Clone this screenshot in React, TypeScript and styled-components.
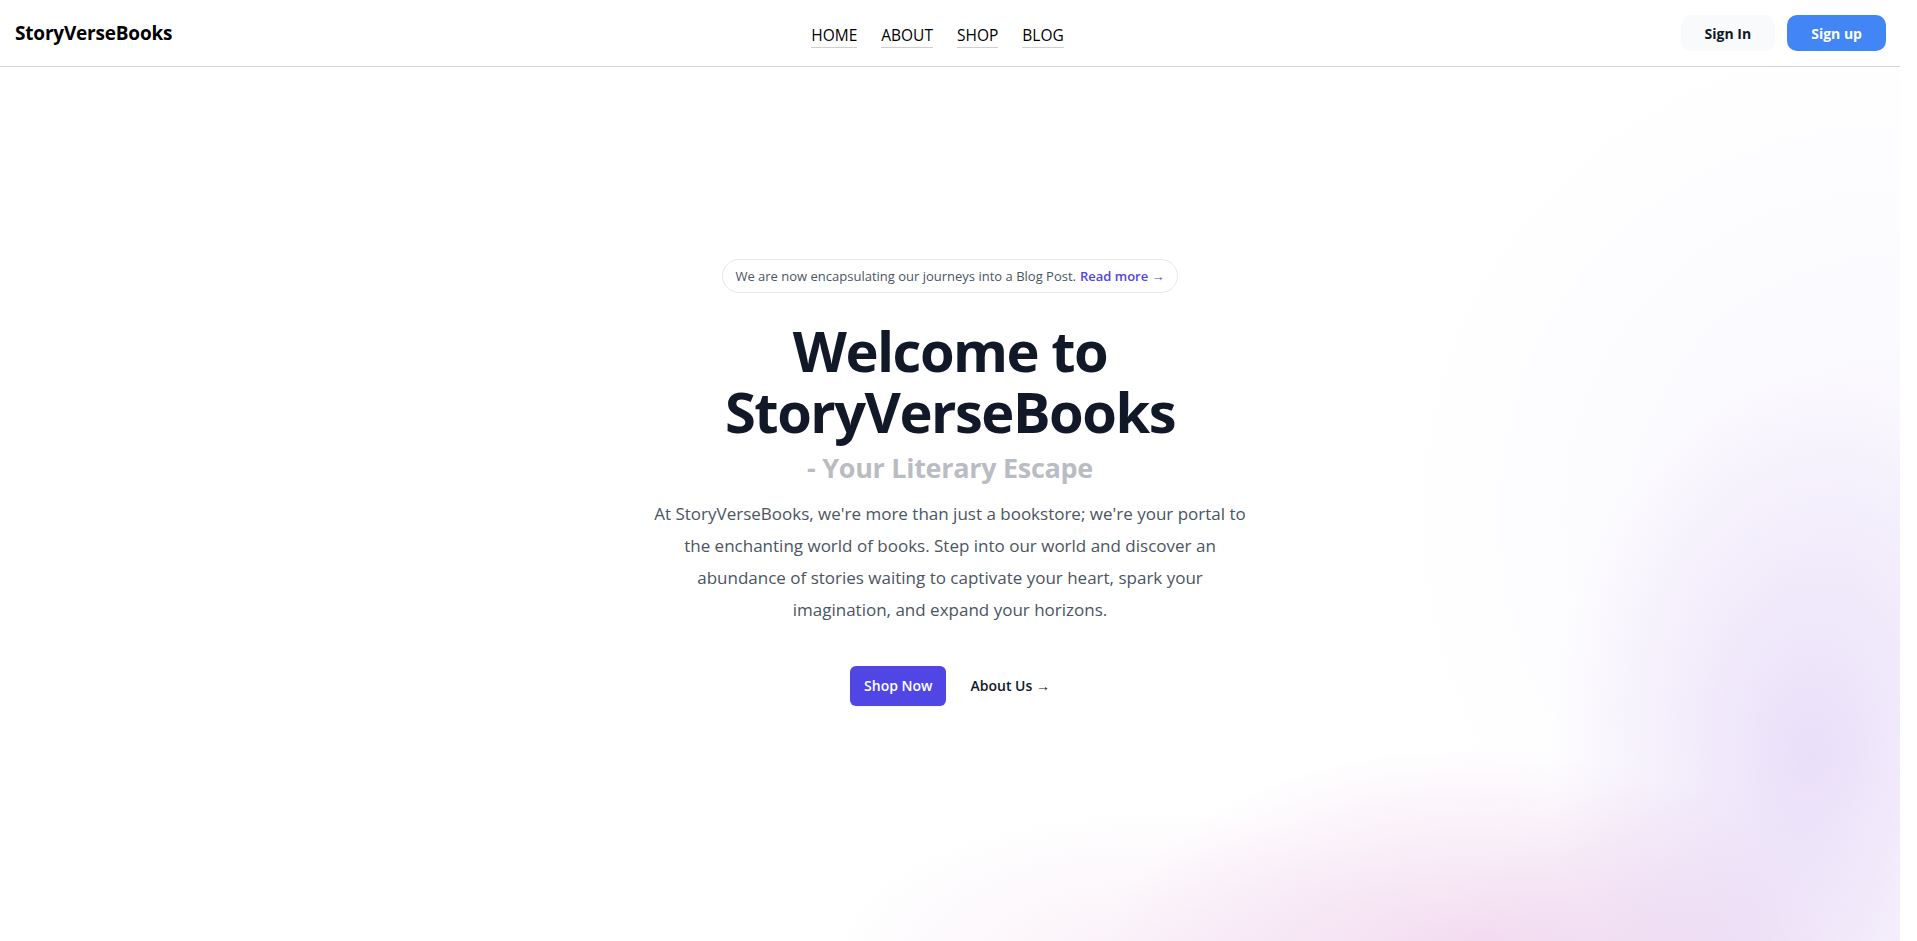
import * as React from "react"
import styled, { createGlobalStyle } from "styled-components"

const GlobalStyles = createGlobalStyle`
  html, body {
    margin: 0;
    padding: 0;
    background: #ffffff;
    font-family: "Open Sans", "Noto Sans", Arial, sans-serif;
    color: #111827;
  }
  * {
    box-sizing: border-box;
  }
`

// the page scrolls inside this frame; the right gutter keeps room for the scrollbar
const Page = styled.main`
  height: 100vh;
  overflow-y: scroll;
  padding-right: 17px;

  &::-webkit-scrollbar {
    width: 17px;
  }
  &::-webkit-scrollbar-track {
    background: #f1f1f1;
  }
  &::-webkit-scrollbar-thumb {
    background: #c1c1c1;
    border: 2px solid #f1f1f1;
  }
`

const Header = styled.header`
  height: 67px;
  display: flex;
  align-items: center;
  justify-content: space-between;
  padding: 0 14px 0 15px;
  border-bottom: 1px solid #d6d6d6;
  background: #ffffff;
`

const Logo = styled.a`
  font-size: 19px;
  font-weight: 700;
  color: #000000;
  text-decoration: none;
  letter-spacing: -0.2px;
`

const Nav = styled.nav`
  display: flex;
  gap: 24px;
  margin-left: 22px;
`

const NavLink = styled.a`
  font-size: 15.5px;
  color: #000000;
  text-decoration: none;
  padding-bottom: 2px;
  border-bottom: 1px solid #cfcfcf;
  line-height: 20px;
  margin-top: 6px;
`

const Actions = styled.div`
  display: flex;
  gap: 12px;
`

const HeaderButton = styled.button<{ $primary?: boolean }>`
  height: 36px;
  padding: 0 24px;
  border: none;
  border-radius: 10px;
  font-family: inherit;
  font-size: 14px;
  font-weight: 700;
  cursor: pointer;
  background: ${(p) => (p.$primary ? "#4285f4" : "#f8fafc")};
  color: ${(p) => (p.$primary ? "#ffffff" : "#111827")};
`

const Hero = styled.section`
  min-height: 2826px;
  display: flex;
  flex-direction: column;
  align-items: center;
  padding-top: 192px;
  text-align: center;
  background:
    radial-gradient(ellipse 360px 210px at 1470px 890px, rgba(235, 198, 232, 0.65), rgba(235, 198, 232, 0) 100%),
    radial-gradient(ellipse 320px 150px at 1150px 895px, rgba(240, 212, 236, 0.35), rgba(240, 212, 236, 0) 100%),
    radial-gradient(ellipse 260px 380px at 1810px 690px, rgba(222, 204, 245, 0.6), rgba(222, 204, 245, 0) 100%),
    radial-gradient(ellipse 260px 200px at 1690px 910px, rgba(228, 206, 240, 0.45), rgba(228, 206, 240, 0) 100%),
    radial-gradient(ellipse 500px 500px at 1890px 450px, rgba(236, 230, 250, 0.35), rgba(236, 230, 250, 0) 100%),
    #ffffff;
  background-repeat: no-repeat;
`

const Announcement = styled.div`
  display: flex;
  align-items: center;
  gap: 4px;
  padding: 4px 12px;
  border: 1px solid rgba(17, 24, 39, 0.1);
  border-radius: 999px;
  font-size: 13px;
  line-height: 24px;
  color: #4b5563;
  margin-bottom: 27px;
`

const ReadMore = styled.a`
  color: #4f46e5;
  font-weight: 600;
  text-decoration: none;
`

const Title = styled.h1`
  margin: 0;
  font-size: 56px;
  line-height: 61px;
  font-weight: 700;
  letter-spacing: -1.5px;
  color: #111827;
  max-width: 540px;
`

const Tagline = styled.p`
  margin: 9px 0 0;
  font-size: 27px;
  line-height: 34px;
  font-weight: 700;
  letter-spacing: -0.3px;
  color: #babcc3;
`

const Lead = styled.p`
  margin: 13px 0 0;
  max-width: 600px;
  font-size: 17px;
  line-height: 32px;
  color: #4b5563;
`

const CtaRow = styled.div`
  display: flex;
  align-items: center;
  gap: 24px;
  margin-top: 40px;
`

const ShopButton = styled.a`
  display: inline-block;
  padding: 10px 14px;
  border-radius: 6px;
  background: #4f46e5;
  color: #ffffff;
  font-size: 14px;
  line-height: 20px;
  font-weight: 600;
  text-decoration: none;
  box-shadow: 0 1px 2px rgba(0, 0, 0, 0.05);
`

const TextLink = styled.a`
  font-size: 14px;
  line-height: 24px;
  font-weight: 600;
  color: #111827;
  text-decoration: none;
`

const App: React.FC = () => {
  return (
    <Page>
      <GlobalStyles />
      <Header>
        <Logo href="#">StoryVerseBooks</Logo>
        <Nav>
          <NavLink href="#">HOME</NavLink>
          <NavLink href="#">ABOUT</NavLink>
          <NavLink href="#">SHOP</NavLink>
          <NavLink href="#">BLOG</NavLink>
        </Nav>
        <Actions>
          <HeaderButton>Sign In</HeaderButton>
          <HeaderButton $primary>Sign up</HeaderButton>
        </Actions>
      </Header>
      <Hero>
        <Announcement>
          We are now encapsulating our journeys into a Blog Post.
          <ReadMore href="#">Read more →</ReadMore>
        </Announcement>
        <Title>Welcome to StoryVerseBooks</Title>
        <Tagline>- Your Literary Escape</Tagline>
        <Lead>
          At StoryVerseBooks, we're more than just a bookstore; we're your portal to the
          enchanting world of books. Step into our world and discover an abundance of
          stories waiting to captivate your heart, spark your imagination, and expand your
          horizons.
        </Lead>
        <CtaRow>
          <ShopButton href="#">Shop Now</ShopButton>
          <TextLink href="#">About Us →</TextLink>
        </CtaRow>
      </Hero>
    </Page>
  )
}

export default App
